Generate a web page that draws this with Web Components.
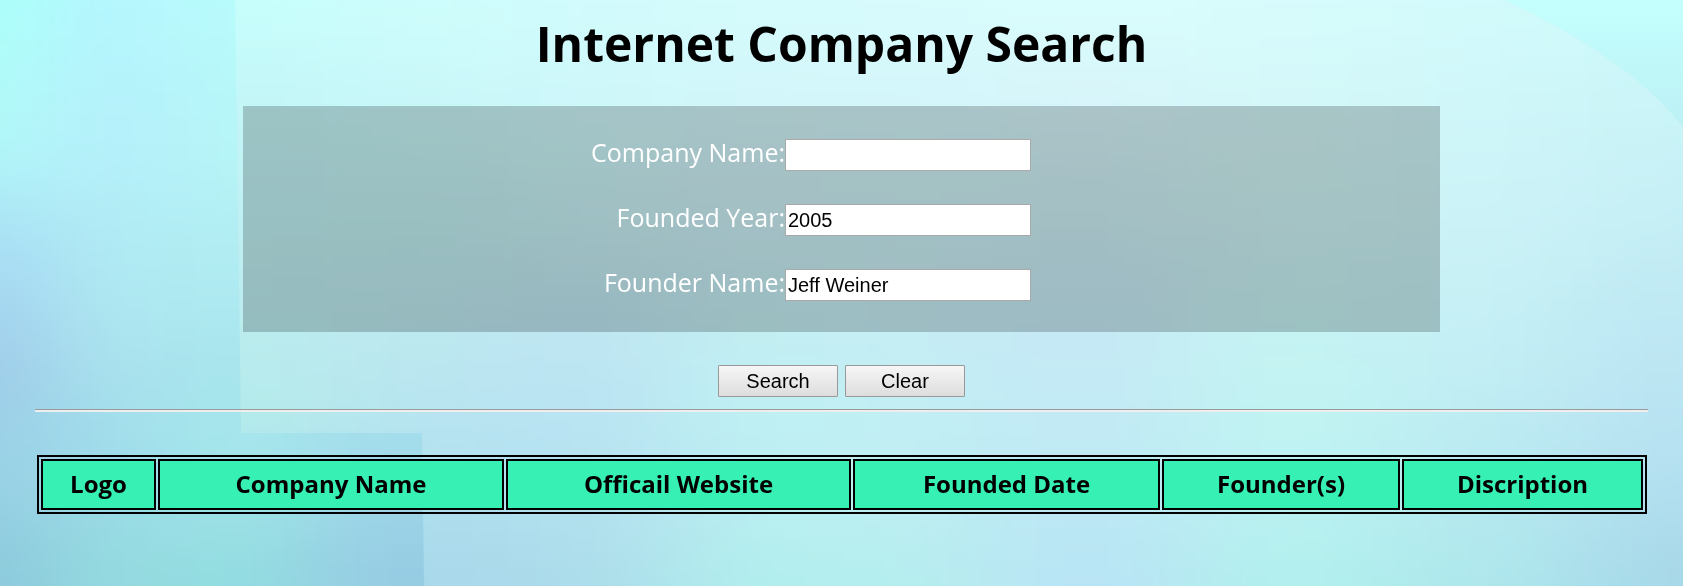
<!DOCTYPE html>
<html lang="en">
<head>
<meta charset="utf-8">
<title>Internet Company Search</title>
<style>
  body { margin: 0; font-family: "Open Sans", "Noto Sans", sans-serif; color: #000; }
</style>
</head>
<body>
<company-search-page>
  <search-panel>
    <search-field label="Company Name:" name="company"></search-field>
    <search-field label="Founded Year:" name="year" value="2005"></search-field>
    <search-field label="Founder Name:" name="founder" value="Jeff Weiner"></search-field>
  </search-panel>
  <search-actions></search-actions>
  <results-table></results-table>
</company-search-page>

<script>
class SoftBackdrop extends HTMLElement {
  constructor() {
    super();
    const mesh = (xs, ys, rows) => rows.map((row, r) => row.split(' ').map((c, i) => {
      const x0 = i ? (xs[i - 1] + xs[i]) / 2 : xs[0] - 300;
      const x1 = i < xs.length - 1 ? (xs[i] + xs[i + 1]) / 2 : xs[i] + 300;
      const y0 = r ? (ys[r - 1] + ys[r]) / 2 : ys[0] - 300;
      const y1 = r < ys.length - 1 ? (ys[r] + ys[r + 1]) / 2 : ys[r] + 300;
      return `<rect x="${x0}" y="${y0}" width="${x1 - x0 + 1}" height="${y1 - y0 + 1}" fill="#${c}"/>`;
    }).join('')).join('');
    const left = mesh([0, 110, 220, 400], [0, 130, 270, 360, 450, 580], [
      'acfffa b5f5fd b8fcfc c0fcfc',
      'b2f8f8 b5f0fb b6f5f8 c0f8fa',
      'a8dcf4 b0eaf3 b0ecf2 b0ecf2',
      '9fcbe9 abe2ee a8e4ec a8e4ec',
      '9bd2e6 9fdceb a5e7eb a3dbeb',
      '8ccadc 94dadf 92dce0 96cce3'
    ]);
    const right = mesh([240, 420, 600, 750, 900, 1080, 1300, 1480, 1683], [0, 100, 200, 310, 400, 480, 580], [
      'c6fffc cefefc d2fbfc d6fcfc d8fcfc d9fdfc d8fcfc d3fbfc ccfafa',
      'c3f6f8 c9f7f9 cef7fa d2f6fa d4f6fb d8f5fa d4f8f9 cff6f9 caf5f8',
      'c0f0f3 c1f1f2 c8f2f5 ceeff6 cbf2f4 cdf0f6 cff4f5 ccf3f7 c6eff6',
      'bcecef bde9ef bfe6f1 c3eef2 c6ecf4 c6e9f5 c6f2f3 c6f0f5 bee8f3',
      'b5eceb b9e5f0 bbe3f4 bff1f2 c2eef4 c4eaf5 c2f5f2 c0ecf4 bae3f2',
      'aee8ea b0e1ef b5e2f0 bcf0f2 bfeef3 bde8f4 bdf2f2 b7eaf0 b3dff0',
      'a6dce9 a7d7ea acdcea b1efed b5eeee b9e4f5 b1f0ed aee7ec a6d7e8'
    ]);
    this.attachShadow({ mode: 'open' }).innerHTML = `
      <style>
        :host { position: fixed; inset: 0; z-index: -1; overflow: hidden; }
        svg { display: block; width: 100%; height: 100%; }
      </style>
      <svg viewBox="0 0 1683 586" preserveAspectRatio="none" aria-hidden="true">
        <defs>
          <filter id="soft" filterUnits="userSpaceOnUse" x="-300" y="-300" width="2300" height="1200" color-interpolation-filters="sRGB"><feGaussianBlur stdDeviation="46 42"/></filter>
          <filter id="softer" filterUnits="userSpaceOnUse" x="-300" y="-300" width="2300" height="1200" color-interpolation-filters="sRGB"><feGaussianBlur stdDeviation="66 42"/></filter>
          <clipPath id="sheet"><path d="M235 0H1505Q1630 59 1683 127V586H424L422 433H241Z"/></clipPath>
          <linearGradient id="corner" x2="0" y2="1"><stop stop-color="#c4fffd"/><stop offset="1" stop-color="#bbeff4"/></linearGradient>
        </defs>
        <g filter="url(#soft)">${left}</g>
        <rect x="1450" width="233" height="140" fill="url(#corner)"/>
        <g clip-path="url(#sheet)"><g filter="url(#softer)">${right}</g></g>
      </svg>`;
  }
}
customElements.define('soft-backdrop', SoftBackdrop);

class CompanySearchPage extends HTMLElement {
  constructor() {
    super();
    this.attachShadow({ mode: 'open' }).innerHTML = `
      <style>
        :host { display: block; padding: 10px 35px 0; }
        h1 { margin: 0 0 28px; font-size: 48px; line-height: 68px; font-weight: 700; text-align: center; }
      </style>
      <soft-backdrop></soft-backdrop>
      <h1>Internet Company Search</h1>
      <slot></slot>`;
  }
}
customElements.define('company-search-page', CompanySearchPage);

class SearchPanel extends HTMLElement {
  constructor() {
    super();
    this.attachShadow({ mode: 'open' }).innerHTML = `
      <style>
        :host { display: flex; flex-direction: column; gap: 33px; margin: 0 208px; padding: 33px 0 31px;
                background: rgba(0, 0, 0, .2); }
      </style>
      <slot></slot>`;
  }
}
customElements.define('search-panel', SearchPanel);

class SearchField extends HTMLElement {
  constructor() {
    super();
    this.attachShadow({ mode: 'open' }).innerHTML = `
      <style>
        :host { display: grid; grid-template-columns: 246px 359px; justify-content: center; height: 32px; }
        label { color: #fff; font-size: 25px; line-height: 26px; text-align: right; white-space: nowrap; }
        input { box-sizing: border-box; width: 246px; height: 32px; margin: 0; padding: 0 2px;
                border: 1px solid #a9a9a9; border-radius: 0; background: #fff; color: #000;
                font: 20px "Liberation Sans", Arial, sans-serif; }
      </style>
      <label for="field"></label><input id="field" type="text">`;
    const input = this.shadowRoot.querySelector('input');
    this.shadowRoot.querySelector('label').textContent = this.getAttribute('label');
    input.name = this.getAttribute('name');
    input.value = this.getAttribute('value') || '';
  }
  clear() { this.shadowRoot.querySelector('input').value = ''; }
}
customElements.define('search-field', SearchField);

class SearchActions extends HTMLElement {
  constructor() {
    super();
    this.attachShadow({ mode: 'open' }).innerHTML = `
      <style>
        :host { display: block; }
        div { display: flex; justify-content: center; gap: 7px; padding: 33px 0 12px; }
        button { box-sizing: border-box; width: 120px; height: 32px; padding: 0; border: 1px solid #999;
                 border-radius: 1px; background: linear-gradient(#f6f6f6, #dddddd); color: #000;
                 font: 20px "Liberation Sans", Arial, sans-serif; }
        hr { height: 0; margin: 0; border: solid; border-width: 1px 0 2px; border-color: #9a9a9a #eee #eee; }
      </style>
      <div><button type="button">Search</button><button type="button" id="clear">Clear</button></div>
      <hr>`;
    this.shadowRoot.getElementById('clear').addEventListener('click', () =>
      document.querySelectorAll('search-field').forEach(f => f.clear()));
  }
}
customElements.define('search-actions', SearchActions);

class ResultsTable extends HTMLElement {
  constructor() {
    super();
    this.attachShadow({ mode: 'open' }).innerHTML = `
      <style>
        :host { display: block; padding: 43px 1px 0 2px; }
        table { width: 100%; table-layout: fixed; border: 2px solid #000; border-collapse: separate; border-spacing: 2px; }
        th { box-sizing: border-box; height: 51px; padding: 0 0 1px; border: 2px solid #000; background: #37f0b4;
             font-size: 24px; line-height: 34px; font-weight: 700; }
      </style>
      <table>
        <colgroup><col style="width:115px"><col style="width:346px"><col style="width:345px"><col style="width:307px"><col style="width:238px"><col style="width:241px"></colgroup>
        <thead><tr>
          <th scope="col">Logo</th><th scope="col">Company Name</th><th scope="col">Officail Website</th>
          <th scope="col">Founded Date</th><th scope="col">Founder(s)</th><th scope="col">Discription</th>
        </tr></thead>
      </table>`;
  }
}
customElements.define('results-table', ResultsTable);
</script>
</body>
</html>
